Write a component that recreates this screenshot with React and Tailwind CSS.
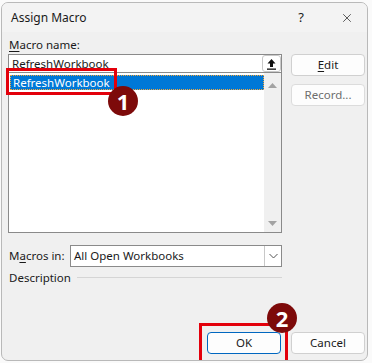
import { X } from "lucide-react";

const font = { fontFamily: '"Noto Sans", "Open Sans", sans-serif' };

const Btn = ({ children, className = "" }) => (
  <div
    className={`h-[22px] w-[74px] flex items-center justify-center rounded-[4px] border bg-[#fdfdfd] text-[11.5px] ${className}`}
  >
    {children}
  </div>
);

const Badge = ({ n, className }) => (
  <div
    className={`absolute w-[30px] h-[30px] rounded-full bg-[#7d0a0a] flex items-center justify-center text-white text-[22px] font-bold leading-none ${className}`}
  >
    {n}
  </div>
);

export default function App() {
  return (
    <div className="w-[372px] h-[363px] bg-[#fafafa] overflow-hidden pt-[2px] pl-[1px]" style={font}>
      <div className="relative w-[367px] h-[359px] rounded-[7px] border border-[#b9b9b9] bg-[#f0f0f0] text-[#1a1a1a] overflow-hidden">
        {/* title bar */}
        <div className="h-[29px] bg-[#f3f3f3] flex items-center pl-[9px] pr-[13px] text-[12px]">
          <span className="flex-1">Assign Macro</span>
          <span className="mr-[36px] text-[13px]">?</span>
          <X className="w-[14px] h-[14px]" strokeWidth={1.2} />
        </div>

        {/* body */}
        <div className="flex pl-[6px] pt-[4px] text-[11.5px]">
          <div className="w-[274px] flex flex-col">
            <div className="h-[17px] leading-[17px] pl-[1px]">
              <span className="underline underline-offset-2">M</span>acro name:
            </div>
            <div className="mt-[1px] h-[19px] border border-[#8a8a8a] bg-white flex items-center pl-[3px]">
              <span className="flex-1">RefreshWorkbook</span>
              <div className="w-[19px] h-[17px] border border-[#c8c8c8] rounded-[3px] bg-white flex items-center justify-center">
                <svg width="11" height="12" viewBox="0 0 11 12">
                  <path d="M5.5 1 L9.5 5.5 H7 V9 H4 V5.5 H1.5 Z" fill="#111" />
                  <rect x="1" y="10.5" width="9" height="1.3" fill="#111" />
                </svg>
              </div>
            </div>
            <div className="h-[160px] border border-t-0 border-[#8a8a8a] bg-white flex">
              <div className="flex-1 pt-[2px] pl-[1px]">
                <div className="h-[15px] bg-[#0078d7] text-white pl-[2px] leading-[13px] border border-dotted border-[#f6a73a]">
                  RefreshWorkbook
                </div>
              </div>
              <div className="w-[17px] bg-[#f0f0f0] flex flex-col items-center justify-between pt-[10px] pb-[6px]">
                <svg width="9" height="5" viewBox="0 0 9 5">
                  <path d="M0 5 L4.5 0 L9 5 Z" fill="#a3a3a3" />
                </svg>
                <svg width="9" height="5" viewBox="0 0 9 5">
                  <path d="M0 0 L9 0 L4.5 5 Z" fill="#a3a3a3" />
                </svg>
              </div>
            </div>

            <div className="mt-[12px] flex items-center">
              <span className="w-[62px] pl-[1px]">
                M<span className="underline underline-offset-2">a</span>cros in:
              </span>
              <div className="flex-1 h-[22px] border border-[#8a8a8a] bg-white flex items-center pl-[3px]">
                <span className="flex-1">All Open Workbooks</span>
                <div className="w-[17px] h-full border-l border-[#c8c8c8] flex items-center justify-center">
                  <svg width="9" height="6" viewBox="0 0 9 6">
                    <path d="M0.5 1 L4.5 5 L8.5 1" fill="none" stroke="#555" strokeWidth="1" />
                  </svg>
                </div>
              </div>
            </div>

            <div className="mt-[2px] flex items-center">
              <span className="pl-[1px] pr-[6px]">Description</span>
              <div className="flex-1 h-px bg-[#d5d5d5]" />
            </div>
          </div>

          <div className="ml-[9px] flex flex-col pt-[18px] gap-[8px]">
            <Btn className="border-[#d0d0d0]">
              <span>
                <span className="underline underline-offset-2">E</span>dit
              </span>
            </Btn>
            <Btn className="border-[#dcdcdc] text-[#6d6d6d]">Record...</Btn>
          </div>
        </div>

        {/* bottom buttons */}
        <div className="absolute left-[205px] top-[329px] flex gap-[10px]">
          <Btn className="border-[#0067c0]">OK</Btn>
          <Btn className="border-[#d0d0d0]">Cancel</Btn>
        </div>

        {/* annotations */}
        <div className="absolute left-[4px] top-[65px] w-[111px] h-[27px] border-[3px] border-[#e3000b]" />
        <Badge n="1" className="left-[106px] top-[83px]" />
        <div className="absolute left-[197px] top-[320px] w-[89px] h-[40px] border-[3px] border-[#e3000b]" />
        <Badge n="2" className="left-[265px] top-[300px]" />
      </div>
    </div>
  );
}
